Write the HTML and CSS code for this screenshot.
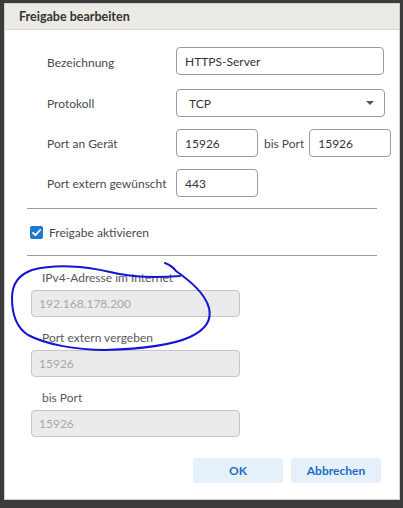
FILE: index.html
```html
<!DOCTYPE html>
<html lang="de">
<head>
<meta charset="utf-8">
<title>Freigabe bearbeiten</title>
<link rel="stylesheet" href="styles.css">
</head>
<body>
<div class="page">
  <div class="dialog">
    <div class="head">Freigabe bearbeiten</div>
    <div class="body">
      <div class="form">
        <div class="label">Bezeichnung</div>
        <div class="field first"><div class="input wide">HTTPS-Server</div></div>
        <div class="label">Protokoll</div>
        <div class="field"><div class="input select">TCP<span class="caret"></span></div></div>
        <div class="label">Port an Gerät</div>
        <div class="field"><div class="input port">15926</div><span class="bis">bis Port</span><div class="input port">15926</div></div>
        <div class="label">Port extern gewünscht</div>
        <div class="field"><div class="input port">443</div></div>
      </div>
      <div class="sep"></div>
      <div class="check">
        <span class="box"><svg width="13" height="13" viewBox="0 0 13 13"><path d="M3 6.8 L5.4 9.2 L10.2 4" fill="none" stroke="#fff" stroke-width="1.8" stroke-linecap="round" stroke-linejoin="round"/></svg></span>
        <span>Freigabe aktivieren</span>
      </div>
      <div class="sep"></div>
      <div class="stack">
        <div class="slabel">IPv4-Adresse im Internet</div>
        <div class="input disabled">192.168.178.200</div>
        <div class="slabel">Port extern vergeben</div>
        <div class="input disabled">15926</div>
        <div class="slabel">bis Port</div>
        <div class="input disabled">15926</div>
      </div>
      <div class="actions">
        <div class="btn">OK</div>
        <div class="btn">Abbrechen</div>
      </div>
    </div>
    <svg class="scribble" width="403" height="508" viewBox="0 0 403 508">
      <path d="M165 263 C 170 265, 174 268, 176 271 C 190 281, 205 293, 209 308 C 212 320, 205 330, 190 337 C 170 346, 140 349, 105 350 C 75 350, 45 344, 28 335 C 17 328, 12 315, 12 298 C 12 285, 18 275, 32 270 C 55 264, 85 266, 110 272 C 130 277, 155 278, 180 276" fill="none" stroke="#1414d2" stroke-width="2" stroke-linecap="round" stroke-linejoin="round"/>
    </svg>
  </div>
</div>
</body>
</html>
```

FILE: styles.css
```css
html, body {
  margin: 0;
  padding: 0;
}
body {
  width: 403px;
  height: 508px;
  overflow: hidden;
  background: #3b3b3b;
  font-family: Lato, "Noto Sans", sans-serif;
  font-size: 12px;
  color: #4a4a4a;
}
.page {
  width: 403px;
  height: 508px;
  padding: 3px 0 0 4px;
  box-sizing: border-box;
  background: #3b3b3b;
}
.dialog {
  position: relative;
  width: 396px;
  height: 497px;
  background: #fff;
  border: 1px solid #cfcfcf;
  box-sizing: border-box;
  display: flex;
  flex-direction: column;
}
.head {
  height: 26px;
  box-sizing: border-box;
  background: #ebeae4;
  border-bottom: 1px solid #d8d8d4;
  padding-left: 14px;
  display: flex;
  align-items: center;
  font-weight: 700;
  font-size: 12.5px;
  color: #333;
}
.body {
  padding: 17px 22px 0 22px;
  display: flex;
  flex-direction: column;
}
.form {
  display: grid;
  grid-template-columns: 129px 1fr;
  row-gap: 12px;
  padding-left: 20px;
  align-items: center;
}
.field.first {
  margin-bottom: 2px;
}
.label {
  color: #4a4a4a;
  white-space: nowrap;
}
.field {
  display: flex;
  align-items: center;
}
.input {
  height: 28px;
  box-sizing: border-box;
  border: 1px solid #9a9a9a;
  border-radius: 4px;
  padding: 0 8px;
  display: flex;
  align-items: center;
  font-size: 12px;
  color: #333;
  background: #fff;
  white-space: nowrap;
}
.wide {
  width: 208px;
}
.select {
  width: 209px;
  justify-content: space-between;
  padding-left: 12px;
  padding-right: 8px;
}
.caret {
  width: 0;
  height: 0;
  border-left: 4px solid transparent;
  border-right: 4px solid transparent;
  border-top: 4px solid #555;
  margin-right: 2px;
}
.port {
  width: 82px;
  flex: none;
}
.bis {
  margin: 0 5px 0 6px;
  color: #4a4a4a;
  white-space: nowrap;
}
.sep {
  height: 1px;
  background: #9c9c9c;
  margin-top: 11px;
  width: 350px;
}
.check {
  display: flex;
  align-items: center;
  gap: 6px;
  height: 46px;
  padding-left: 3px;
  color: #4a4a4a;
}
.check + .sep {
  margin-top: 0;
}
.box {
  width: 13px;
  height: 13px;
  border-radius: 2px;
  background: #1f78d1;
  display: flex;
}
.stack {
  display: flex;
  flex-direction: column;
  padding-left: 4px;
  padding-top: 14px;
}
.slabel {
  padding-left: 11px;
  height: 20px;
  line-height: 16px;
  color: #5a5a5a;
}
.stack .input + .slabel {
  margin-top: 13px;
}
.disabled {
  width: 209px;
  height: 27px;
  background: #ebebeb;
  border-color: #c6c6c6;
  color: #a8a8a8;
  padding-left: 7px;
}
.actions {
  display: flex;
  justify-content: flex-end;
  gap: 8px;
  margin-top: 21px;
  margin-right: -4px;
}
.btn {
  width: 90px;
  height: 25px;
  border-radius: 3px;
  background: #e6f0fa;
  color: #1a6ec2;
  font-weight: 700;
  font-size: 12px;
  display: flex;
  align-items: center;
  justify-content: center;
}
.scribble {
  position: absolute;
  left: -5px;
  top: -4px;
  pointer-events: none;
}
```
